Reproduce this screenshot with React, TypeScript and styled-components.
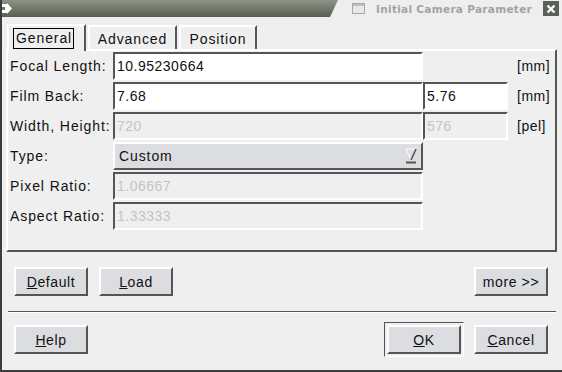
import React from 'react';
import styled, { createGlobalStyle } from 'styled-components';

const GlobalStyle = createGlobalStyle`
  html, body {
    margin: 0;
    padding: 0;
    background: #efefef;
  }
  * {
    box-sizing: border-box;
  }
`;

const Window = styled.div`
  width: 562px;
  height: 372px;
  background: #efefef;
  border-left: 2px solid #3c3c3c;
  border-bottom: 2px solid #3c3c3c;
  font-family: "Liberation Sans", Arial, sans-serif;
  font-size: 14px;
  letter-spacing: 0.9px;
  color: #111;
  display: flex;
  flex-direction: column;
  overflow: hidden;
`;

const TitleBar = styled.div`
  height: 17px;
  margin-left: -2px;
  display: flex;
  align-items: stretch;
  background: linear-gradient(#8d9285, #5a5f54);
`;

const TitleLeft = styled.div`
  flex: 1;
  display: flex;
  align-items: center;
  padding-left: 2px;
`;

const TitleRight = styled.div`
  width: 232px;
  flex-shrink: 0;
  display: flex;
  align-items: center;
  background: #eeeeee;
  clip-path: polygon(8px 0, 100% 0, 100% 100%, 0 100%);
  padding-left: 22px;
  gap: 11px;
`;

const TitleText = styled.span`
  font-family: "DejaVu Sans", sans-serif;
  font-weight: bold;
  font-size: 10.5px;
  letter-spacing: 0.3px;
  color: #a3a3a3;
  white-space: nowrap;
  overflow: hidden;
  min-width: 0;
`;

const CloseBox = styled.div`
  width: 16px;
  height: 15px;
  flex-shrink: 0;
  margin: 1px 3px 1px auto;
  background: #5b6157;
  display: flex;
  align-items: center;
  justify-content: center;
`;

const Body = styled.div`
  flex: 1;
  display: flex;
  flex-direction: column;
  padding: 5px 4px 0 4px;
`;

const TabBar = styled.div`
  height: 27px;
  display: flex;
  align-items: flex-end;
  padding-left: 1px;
  gap: 2px;
`;

const Tab = styled.div<{ active?: boolean; w: number }>`
  width: ${p => p.w}px;
  height: ${p => (p.active ? '27px' : '24px')};
  display: flex;
  align-items: center;
  justify-content: ${p => (p.active ? 'flex-start' : 'center')};
  padding-left: ${p => (p.active ? '4px' : '0')};
  border-top: 2px solid #ffffff;
  border-left: 2px solid #ffffff;
  border-right: 2px solid #555555;
  background: #efefef;
  margin-bottom: ${p => (p.active ? '-2px' : '0')};
  position: relative;
  z-index: ${p => (p.active ? 1 : 0)};
  padding-top: ${p => (p.active ? '0' : '2px')};
`;

const FocusFrame = styled.span`
  border: 1px solid #000;
  padding: 2px 1px 3px 2px;
  line-height: 14px;
`;

const Panel = styled.div`
  height: 203px;
  border-top: 2px solid #ffffff;
  border-left: 2px solid #ffffff;
  border-right: 2px solid #555555;
  border-bottom: 2px solid #555555;
  padding: 1px 0 0 2px;
  width: 551px;
`;

const FormGrid = styled.div`
  display: grid;
  grid-template-columns: 103px 310px 85px 1fr;
  grid-auto-rows: 28px;
  row-gap: 2px;
  align-items: center;
`;

const Label = styled.div`
  white-space: nowrap;
`;

const Input = styled.div<{ disabled?: boolean }>`
  height: 28px;
  background: ${p => (p.disabled ? '#efefef' : '#ffffff')};
  color: ${p => (p.disabled ? '#c4c4c4' : '#111')};
  border-top: 2px solid #555555;
  border-left: 2px solid #555555;
  border-right: 2px solid #ffffff;
  border-bottom: 2px solid #ffffff;
  padding-left: 2px;
  display: flex;
  align-items: center;
  letter-spacing: 0.5px;
`;

const Combo = styled.div`
  height: 28px;
  background: #dcdde1;
  border-top: 2px solid #ffffff;
  border-left: 2px solid #ffffff;
  border-right: 2px solid #555555;
  border-bottom: 2px solid #555555;
  padding: 0 4px 0 4px;
  display: flex;
  align-items: center;
  justify-content: space-between;
`;

const Unit = styled.div`
  padding-left: 9px;
  letter-spacing: 0.5px;
`;

const ButtonRow = styled.div<{ top?: number }>`
  display: flex;
  align-items: center;
  margin-top: ${p => p.top || 0}px;
  padding: 0 10px 0 8px;
  gap: 11px;
`;

const Spacer = styled.div`
  flex: 1;
`;

const Button = styled.div`
  width: 74px;
  height: 29px;
  background: #dcdde1;
  border-top: 2px solid #ffffff;
  border-left: 2px solid #ffffff;
  border-right: 2px solid #555555;
  border-bottom: 2px solid #555555;
  display: flex;
  align-items: center;
  justify-content: center;
  letter-spacing: 0.6px;
`;

const DefaultFrame = styled.div`
  padding: 2px;
  border-top: 1px solid #555555;
  border-left: 1px solid #555555;
  border-right: 1px solid #ffffff;
  border-bottom: 1px solid #ffffff;
  margin: -3px -1px -3px -3px;
`;

const Separator = styled.div`
  height: 2px;
  margin: 15px 2px 12px 2px;
  border-top: 1px solid #555555;
  border-bottom: 1px solid #ffffff;
`;

const Mnemonic = styled.span`
  text-decoration: underline;
`;

const ComboArrow = () => (
  <svg width="12" height="16" viewBox="0 0 12 16">
    <path d="M1 1 L11 1 L6 12 Z" fill="#dcdde1" stroke="#ffffff" strokeWidth="1" />
    <path d="M11 1 L6 12" stroke="#555555" strokeWidth="1.6" />
    <rect x="1" y="13.5" width="10" height="2" fill="#555555" />
  </svg>
);

const App: React.FC = () => {
  return (
    <>
      <GlobalStyle />
      <Window>
        <TitleBar>
          <TitleLeft>
            <svg width="11" height="11" viewBox="0 0 11 11">
              <path d="M0 1 H5 V0 L10 5.5 L5 11 V10 H0 Z" fill="#ffffff" />
              <rect x="0" y="4" width="3" height="3" fill="#6e7368" />
            </svg>
          </TitleLeft>
          <TitleRight>
            <svg width="13" height="11" viewBox="0 0 13 11" style={{ flexShrink: 0 }}>
              <rect x="0.5" y="0.5" width="12" height="10" fill="#e8e8e8" stroke="#a8a8a8" />
              <rect x="1" y="1" width="11" height="2" fill="#b9bec6" />
            </svg>
            <TitleText>Initial Camera Parameter</TitleText>
            <CloseBox>
              <svg width="10" height="10" viewBox="0 0 10 10">
                <path d="M1.5 1.5 L8.5 8.5 M8.5 1.5 L1.5 8.5" stroke="#ffffff" strokeWidth="2.4" />
              </svg>
            </CloseBox>
          </TitleRight>
        </TitleBar>
        <Body>
          <TabBar>
            <Tab active w={79}>
              <FocusFrame>General</FocusFrame>
            </Tab>
            <Tab w={89}>Advanced</Tab>
            <Tab w={78}>Position</Tab>
          </TabBar>
          <Panel>
            <FormGrid>
              <Label>Focal Length:</Label>
              <Input>10.95230664</Input>
              <div />
              <Unit>[mm]</Unit>

              <Label>Film Back:</Label>
              <Input>7.68</Input>
              <Input>5.76</Input>
              <Unit>[mm]</Unit>

              <Label>Width, Height:</Label>
              <Input disabled>720</Input>
              <Input disabled>576</Input>
              <Unit>[pel]</Unit>

              <Label>Type:</Label>
              <Combo>
                <span>Custom</span>
                <ComboArrow />
              </Combo>
              <div />
              <div />

              <Label>Pixel Ratio:</Label>
              <Input disabled>1.06667</Input>
              <div />
              <div />

              <Label>Aspect Ratio:</Label>
              <Input disabled>1.33333</Input>
              <div />
              <div />
            </FormGrid>
          </Panel>
          <ButtonRow top={15}>
            <Button>
              <span><Mnemonic>D</Mnemonic>efault</span>
            </Button>
            <Button>
              <span><Mnemonic>L</Mnemonic>oad</span>
            </Button>
            <Spacer />
            <Button>more &gt;&gt;</Button>
          </ButtonRow>
          <Separator />
          <ButtonRow>
            <Button>
              <span><Mnemonic>H</Mnemonic>elp</span>
            </Button>
            <Spacer />
            <DefaultFrame>
              <Button>
                <span><Mnemonic>O</Mnemonic>K</span>
              </Button>
            </DefaultFrame>
            <Button>
              <span><Mnemonic>C</Mnemonic>ancel</span>
            </Button>
          </ButtonRow>
        </Body>
      </Window>
    </>
  );
};

export default App;
